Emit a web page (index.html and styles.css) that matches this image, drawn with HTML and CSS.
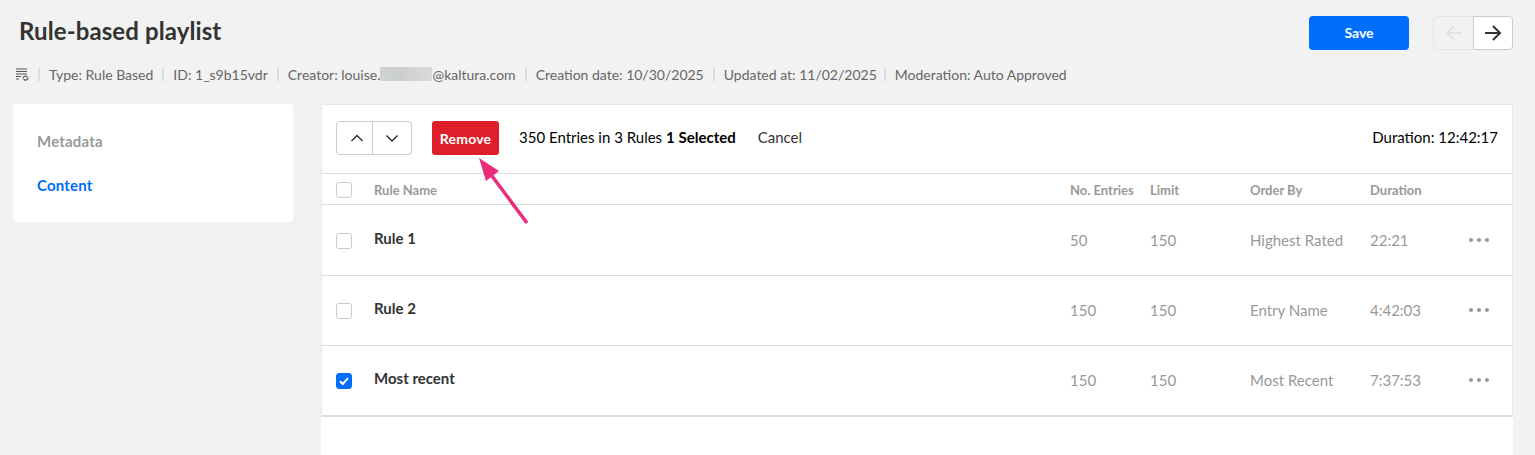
FILE: index.html
```html
<!DOCTYPE html>
<html>
<head>
    <meta charset="utf-8">
    <title>Rule-based playlist</title>
    <link rel="stylesheet" href="styles.css">
</head>
<body>
    <header class="top">
        <h1>Rule-based playlist</h1>
        <div class="top-actions">
            <button class="save">Save</button>
            <div class="pager">
                <button class="pager-btn is-disabled">
                    <svg width="20" height="20" viewBox="0 0 20 20" fill="none" stroke="#e2e2e2" stroke-width="2"><path d="M18 10H3M10 3l-7 7 7 7"/></svg>
                </button>
                <button class="pager-btn">
                    <svg width="20" height="20" viewBox="0 0 20 20" fill="none" stroke="#333" stroke-width="2"><path d="M2 10h15M10 3l7 7-7 7"/></svg>
                </button>
            </div>
        </div>
    </header>

    <div class="meta">
        <svg class="meta-icon" width="14" height="14" viewBox="0 0 14 14" fill="none" stroke="#555" stroke-width="1.2">
            <path d="M1 2h11M1 4.5h11M1 7h11M1 9.5h5M1 12h3"/>
            <path d="M8 11.5a2.4 2.4 0 0 1 4.3-1.4M13 10.5a2.4 2.4 0 0 1-4.3 1.6"/>
        </svg>
        <span class="meta-item">Type: Rule Based</span>
        <span class="meta-item">ID: 1_s9b15vdr</span>
        <span class="meta-item">Creator: louise.<span class="blur"></span>@kaltura.com</span>
        <span class="meta-item">Creation date: 10/30/2025</span>
        <span class="meta-item">Updated at: 11/02/2025</span>
        <span class="meta-item">Moderation: Auto Approved</span>
    </div>

    <main class="layout">
        <nav class="side">
            <a class="side-link">Metadata</a>
            <a class="side-link active">Content</a>
        </nav>

        <section class="panel">
            <div class="card">
                <div class="toolbar">
                    <div class="updown">
                        <button>
                            <svg width="14" height="14" viewBox="0 0 14 14" fill="none" stroke="#333" stroke-width="1.5"><path d="M1.5 10L7 4.5l5.5 5.5"/></svg>
                        </button>
                        <button>
                            <svg width="14" height="14" viewBox="0 0 14 14" fill="none" stroke="#333" stroke-width="1.5"><path d="M1.5 4.5L7 10l5.5-5.5"/></svg>
                        </button>
                    </div>
                    <button class="remove">Remove</button>
                    <span class="count">350 Entries in 3 Rules</span>
                    <b class="selected">1 Selected</b>
                    <span class="cancel">Cancel</span>
                    <span class="total">Duration: 12:42:17</span>
                </div>

                <div class="row head">
                    <span class="check"></span>
                    <span class="name">Rule Name</span>
                    <span class="entries">No. Entries</span>
                    <span class="limit">Limit</span>
                    <span class="order">Order By</span>
                    <span class="dur">Duration</span>
                    <span class="more"></span>
                </div>
                <div class="row item">
                    <span class="check"></span>
                    <span class="name">Rule 1</span>
                    <span class="entries">50</span>
                    <span class="limit">150</span>
                    <span class="order">Highest Rated</span>
                    <span class="dur">22:21</span>
                    <span class="more"><i></i><i></i><i></i></span>
                </div>
                <div class="row item">
                    <span class="check"></span>
                    <span class="name">Rule 2</span>
                    <span class="entries">150</span>
                    <span class="limit">150</span>
                    <span class="order">Entry Name</span>
                    <span class="dur">4:42:03</span>
                    <span class="more"><i></i><i></i><i></i></span>
                </div>
                <div class="row item">
                    <span class="check checked">
                        <svg width="12" height="12" viewBox="0 0 12 12" fill="none" stroke="#fff" stroke-width="2"><path d="M2 6.2l2.8 2.8L10 3.2"/></svg>
                    </span>
                    <span class="name">Most recent</span>
                    <span class="entries">150</span>
                    <span class="limit">150</span>
                    <span class="order">Most Recent</span>
                    <span class="dur">7:37:53</span>
                    <span class="more"><i></i><i></i><i></i></span>
                </div>
            </div>

            <!-- annotation arrow on the screenshot -->
            <svg class="callout" width="60" height="70" viewBox="0 0 60 70">
                <path d="M54 65L19 18" stroke="#ee2a7b" stroke-width="3.5" fill="none"/>
                <path d="M6 0L26 13 13 23z" fill="#ee2a7b"/>
            </svg>
        </section>
    </main>
</body>
</html>
```

FILE: styles.css
```css
* {
    box-sizing: border-box;
    margin: 0;
    padding: 0;
}

html, body {
    height: 455px;
    overflow: hidden;
}

body {
    background: #f2f2f2;
    font-family: Lato, sans-serif;
    color: #333;
    font-size: 14px;
}

button {
    font-family: inherit;
    cursor: pointer;
}

.top {
    display: flex;
    justify-content: space-between;
    align-items: flex-start;
    padding: 16px 22px 0 19px;
    height: 65px;
}

h1 {
    font-size: 24px;
    line-height: 30px;
    font-weight: 700;
    letter-spacing: 0.1px;
    color: #333;
}

.top-actions {
    display: flex;
    gap: 24px;
}

.save {
    width: 100px;
    height: 34px;
    padding-bottom: 2px;
    background: #006efa;
    color: #fff;
    border: none;
    border-radius: 4px;
    font-size: 14px;
    font-weight: 700;
}

.pager {
    display: flex;
}

.pager-btn {
    width: 40px;
    height: 34px;
    background: #fff;
    border: 1px solid #ccc;
    border-radius: 0 4px 4px 0;
    display: flex;
    align-items: center;
    justify-content: center;
}

.pager-btn.is-disabled {
    background: #f2f2f2;
    border-color: #e6e6e6;
    border-right: none;
    border-radius: 4px 0 0 4px;
}

.meta {
    display: flex;
    align-items: center;
    height: 18px;
    margin-bottom: 1px;
    padding-left: 15px;
    color: #666;
    font-size: 14px;
}

.meta-icon {
    margin-right: 9px;
}

.meta-item {
    display: flex;
    align-items: center;
    white-space: pre;
}

.meta-item::before {
    content: "";
    width: 2px;
    height: 13px;
    background: #dcdcdc;
    margin-right: 9px;
}

.meta-item + .meta-item {
    margin-left: 9px;
}

.meta-item:last-child {
    margin-left: 7px;
}

.blur {
    display: inline-block;
    width: 52px;
    height: 14px;
    background: linear-gradient(90deg, #d2d2d2, #cbcfcf 40%, #d6d4d2 70%, #dadada);
}

.layout {
    display: flex;
    align-items: flex-start;
    gap: 28px;
    padding: 20px 22px 0 13px;
}

.side {
    width: 280px;
    height: 118px;
    background: #fff;
    padding: 15px 24px;
    border-radius: 4px;
}

.side-link {
    display: block;
    font-size: 15px;
    font-weight: 700;
    letter-spacing: 0.2px;
    line-height: 44px;
    color: #999;
}

.side-link.active {
    color: #006efa;
}

.panel {
    position: relative;
    width: 1192px;
    height: 360px;
    background: #fff;
}

.card {
    border: 1px solid #e8e8e8;
    border-bottom: 2px solid #dcdcdc;
}

.toolbar {
    display: flex;
    align-items: center;
    height: 69px;
    padding: 0 14px 4px 14px;
    border-bottom: 1px solid #dcdcdc;
    color: #000;
    font-size: 15px;
}

.updown {
    display: flex;
    width: 76px;
    height: 34px;
    margin-top: 2px;
    border: 1px solid #ccc;
    border-radius: 4px;
}

.updown button {
    flex: 1;
    background: none;
    border: none;
    display: flex;
    align-items: center;
    justify-content: center;
}

.updown button:first-child {
    flex: none;
    width: 35px;
    padding-left: 4px;
}

.updown button + button {
    border-left: 1px solid #ccc;
}

.remove {
    width: 67px;
    height: 34px;
    margin: 2px 20px 0;
    background: #de1f2a;
    color: #fff;
    border: none;
    border-radius: 3px;
    font-size: 14px;
    font-weight: 700;
    letter-spacing: 0.2px;
}

.selected {
    margin-left: 4px;
}

.cancel {
    margin-left: 22px;
    color: #333;
}

.total {
    margin-left: auto;
}

.row {
    display: flex;
    align-items: center;
    padding-left: 14px;
    border-bottom: 1px solid #dcdcdc;
}

.row:last-child {
    height: 69px;
    padding-bottom: 2px;
    border-bottom: none;
}

.head {
    height: 31px;
    padding-top: 1px;
    font-size: 13px;
    font-weight: 700;
    color: #999;
}

.item {
    height: 70px;
    padding-bottom: 1px;
    font-size: 15px;
    color: #999;
}

.head + .item {
    height: 71px;
    padding-bottom: 0;
}

.check {
    width: 16px;
    height: 16px;
    flex: none;
    border: 1px solid #ccc;
    border-radius: 3px;
    background: #fff;
    display: flex;
    align-items: center;
    justify-content: center;
}

.item .check {
    margin-top: 2px;
}

.check.checked {
    background: #006efa;
    border-color: #006efa;
}

.name {
    width: 696px;
    margin-left: 22px;
}

.item .name {
    font-weight: 700;
    color: #333;
    margin-bottom: 5px;
}

.row:last-child .name {
    margin-bottom: 3px;
}

.entries {
    width: 80px;
}

.limit {
    width: 100px;
}

.order {
    width: 120px;
}

.dur {
    width: 99px;
}

.more {
    display: flex;
    gap: 4px;
}

.more i {
    width: 4px;
    height: 4px;
    border-radius: 50%;
    background: #999;
}

.callout {
    position: absolute;
    left: 152px;
    top: 54px;
}
```
